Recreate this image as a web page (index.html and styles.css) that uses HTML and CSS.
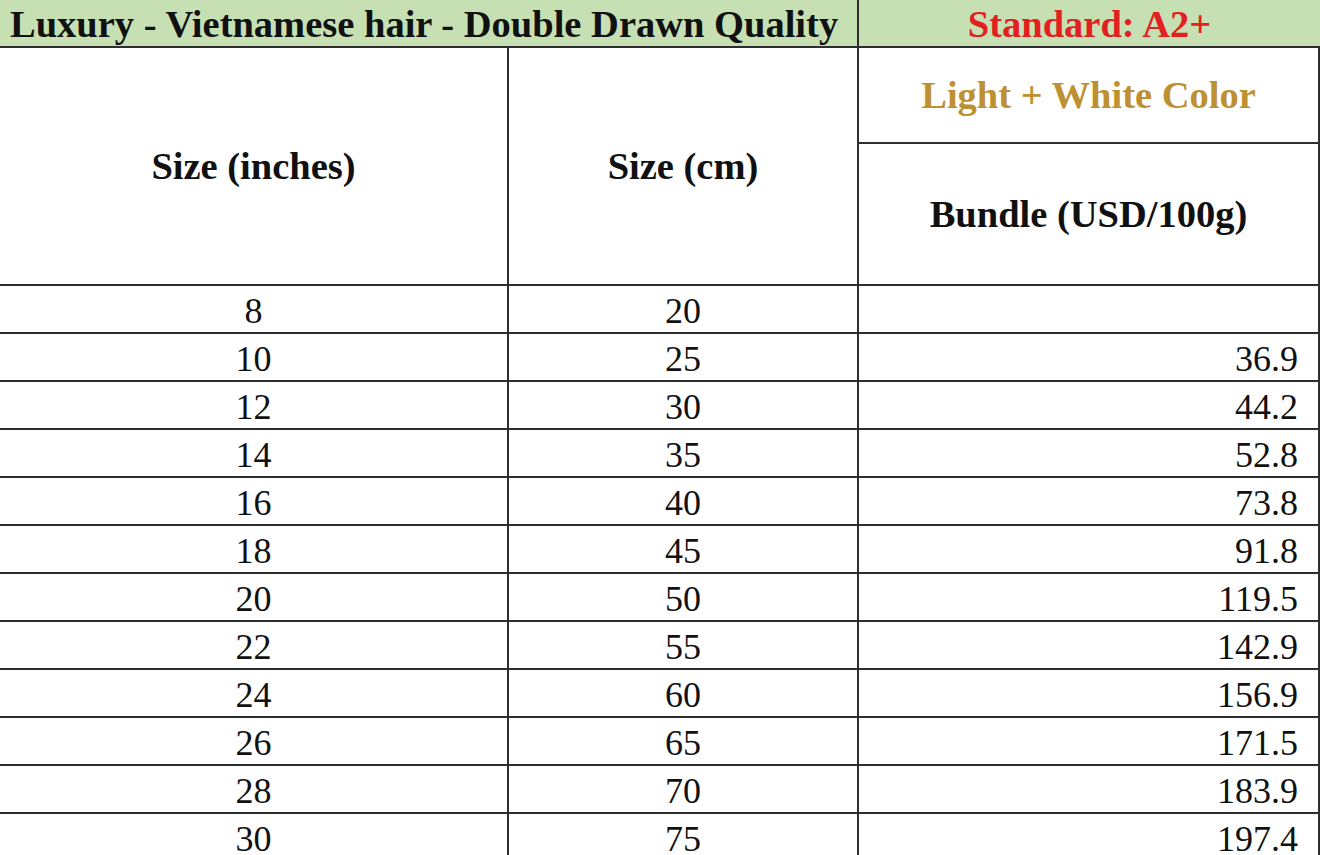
FILE: index.html
```html
<!DOCTYPE html>
<html lang="en">
<head>
<meta charset="utf-8">
<title>Luxury - Vietnamese hair - Double Drawn Quality</title>
<link rel="stylesheet" href="styles.css">
</head>
<body>
<div class="sheet">
  <div class="cell title">Luxury - Vietnamese hair - Double Drawn Quality</div>
  <div class="cell standard">Standard: A2+</div>
  <div class="cell head inches">Size (inches)</div>
  <div class="cell head cm">Size (cm)</div>
  <div class="cell head color">Light + White Color</div>
  <div class="cell head bundle">Bundle (USD/100g)</div>

  <div class="cell c">8</div><div class="cell c">20</div><div class="cell r"></div>
  <div class="cell c">10</div><div class="cell c">25</div><div class="cell r">36.9</div>
  <div class="cell c">12</div><div class="cell c">30</div><div class="cell r">44.2</div>
  <div class="cell c">14</div><div class="cell c">35</div><div class="cell r">52.8</div>
  <div class="cell c">16</div><div class="cell c">40</div><div class="cell r">73.8</div>
  <div class="cell c">18</div><div class="cell c">45</div><div class="cell r">91.8</div>
  <div class="cell c">20</div><div class="cell c">50</div><div class="cell r">119.5</div>
  <div class="cell c">22</div><div class="cell c">55</div><div class="cell r">142.9</div>
  <div class="cell c">24</div><div class="cell c">60</div><div class="cell r">156.9</div>
  <div class="cell c">26</div><div class="cell c">65</div><div class="cell r">171.5</div>
  <div class="cell c">28</div><div class="cell c">70</div><div class="cell r">183.9</div>
  <div class="cell c">30</div><div class="cell c">75</div><div class="cell r">197.4</div>
</div>
</body>
</html>
```
FILE: styles.css
```css
html, body {
  margin: 0;
  padding: 0;
  background: #ffffff;
}
body {
  font-family: "Liberation Serif", "Times New Roman", serif;
  color: #111111;
  overflow: hidden;
}
.sheet {
  display: grid;
  grid-template-columns: 509px 350px 461px;
  grid-template-rows: 48px 96px 142px repeat(12, 48px);
  width: 1320px;
}
.cell {
  box-sizing: border-box;
  display: flex;
  align-items: center;
  border-bottom: 2px solid #2e2e2e;
  line-height: 1;
}
.title {
  grid-column: 1 / span 2;
  background: #c6e0b4;
  border-right: 2px solid #2e2e2e;
  padding-left: 10px;
  font-weight: bold;
  font-size: 38.5px;
  padding-top: 2px;
}
.standard {
  background: #c6e0b4;
  justify-content: center;
  color: #e3201f;
  font-weight: bold;
  font-size: 38.5px;
  padding-top: 2px;
}
.head {
  font-weight: bold;
  font-size: 38.5px;
  justify-content: center;
}
.inches {
  grid-row: 2 / span 2;
  grid-column: 1;
  border-right: 2px solid #2e2e2e;
}
.cm {
  grid-row: 2 / span 2;
  grid-column: 2;
  border-right: 2px solid #2e2e2e;
}
.color {
  color: #bd9131;
  border-right: 2px solid #2e2e2e;
}
.bundle {
  border-right: 2px solid #2e2e2e;
}
.c {
  justify-content: center;
  font-size: 36px;
  border-right: 2px solid #2e2e2e;
  padding-top: 4px;
}
.r {
  justify-content: flex-end;
  font-size: 36px;
  border-right: 2px solid #2e2e2e;
  padding-right: 20px;
  padding-top: 4px;
}
```
